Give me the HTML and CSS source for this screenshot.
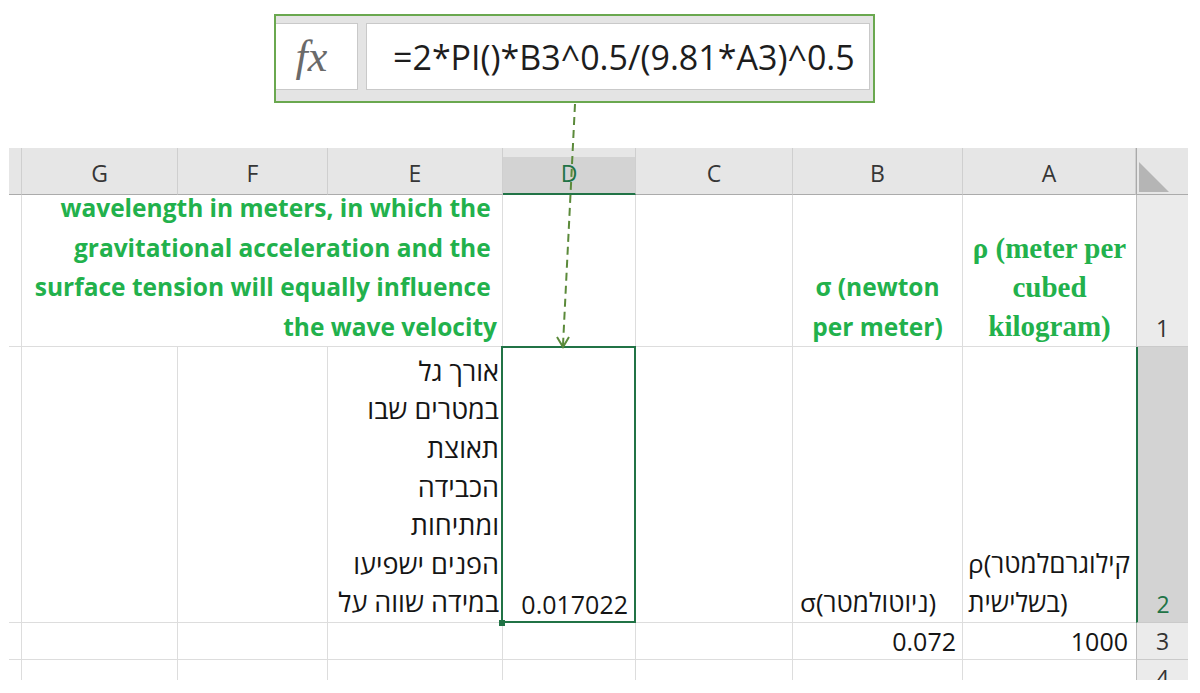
FILE: index.html
```html
<!DOCTYPE html>
<html lang="en">
<head>
<meta charset="utf-8">
<title>Formula</title>
<link rel="stylesheet" href="styles.css">
</head>
<body>
<div class="formula-bar">
  <div class="fx-box"><span class="fx">fx</span></div>
  <div class="formula-input">=2*PI()*B3^0.5/(9.81*A3)^0.5</div>
</div>

<div class="sheet">
  <!-- header row -->
  <div class="hd"></div>
  <div class="hd">G</div>
  <div class="hd">F</div>
  <div class="hd">E</div>
  <div class="hd hd-sel">D</div>
  <div class="hd">C</div>
  <div class="hd">B</div>
  <div class="hd">A</div>
  <div class="corner"><div class="tri"></div></div>

  <!-- row 1 -->
  <div class="c"></div>
  <div class="c merged green-text">wavelength in meters, in which the&nbsp;<br>gravitational acceleration and the&nbsp;<br>surface tension will equally influence&nbsp;<br>the wave velocity</div>
  <div class="c"></div>
  <div class="c"></div>
  <div class="c center green-text">σ (newton<br>per meter)</div>
  <div class="c ca center green-serif">ρ (meter per<br>cubed<br>kilogram)</div>
  <div class="rh rh-bottom">1</div>

  <!-- row 2 -->
  <div class="c"></div>
  <div class="c"></div>
  <div class="c"></div>
  <div class="c heb" dir="rtl">אורך גל<br>במטרים שבו<br>תאוצת<br>הכבידה<br>ומתיחות<br>הפנים ישפיעו<br>במידה שווה על</div>
  <div class="c sel num">0.017022</div>
  <div class="c"></div>
  <div class="c heb-l" dir="ltr">σ(ניוטולמטר)</div>
  <div class="c ca heb-l heb-a" dir="ltr">ρ(קילוגרםלמטר<br>בשלישית)</div>
  <div class="rh rh-bottom rh-sel">2</div>

  <!-- row 3 -->
  <div class="c"></div>
  <div class="c"></div>
  <div class="c"></div>
  <div class="c"></div>
  <div class="c"></div>
  <div class="c"></div>
  <div class="c num num-b">0.072</div>
  <div class="c ca num num-a">1000</div>
  <div class="rh rh-mid">3</div>

  <!-- row 4 -->
  <div class="c"></div>
  <div class="c"></div>
  <div class="c"></div>
  <div class="c"></div>
  <div class="c"></div>
  <div class="c"></div>
  <div class="c"></div>
  <div class="c ca"></div>
  <div class="rh rh-mid">4</div>
</div>

<svg class="arrow" width="1200" height="693" viewBox="0 0 1200 693">
  <path d="M575 104 L563 345" fill="none" stroke="#5b8a3a" stroke-width="2" stroke-dasharray="8 5"/>
  <path d="M557 337 L563 347 L569 337" fill="none" stroke="#5b8a3a" stroke-width="2"/>
</svg>
</body>
</html>
```
FILE: styles.css
```css
html, body {
  margin: 0;
  padding: 0;
}
body {
  position: relative;
  width: 1200px;
  height: 693px;
  overflow: hidden;
  background: #ffffff;
  font-family: "Open Sans", "Liberation Sans", "DejaVu Sans", sans-serif;
  color: #1a1a1a;
}

/* formula bar */
.formula-bar {
  box-sizing: border-box;
  margin: 14px 0 0 274px;
  width: 601px;
  height: 89px;
  border: 2px solid #6aa84f;
  background: #e4e4e4;
  display: flex;
  gap: 8px;
  padding: 7px 3px 11px 0;
}
.fx-box {
  box-sizing: border-box;
  width: 82px;
  background: #ffffff;
  border: 1px solid #c9c9c9;
  border-left: none;
  display: flex;
  align-items: center;
  justify-content: center;
}
.fx {
  font-family: "Liberation Serif", serif;
  font-style: italic;
  font-size: 44px;
  color: #6a6a6a;
  padding-right: 10px;
}
.formula-input {
  flex: 1;
  box-sizing: border-box;
  background: #ffffff;
  border: 1px solid #c9c9c9;
  padding-left: 26px;
  display: flex;
  align-items: center;
  font-size: 34px;
  color: #1d1d1d;
  white-space: nowrap;
}

/* sheet */
.sheet {
  margin: 45px 0 0 9px;
  width: 1179px;
  height: 532px;
  overflow: hidden;
  display: grid;
  grid-template-columns: 13px 156px 150px 175px 133px 157px 170px 173px 52px;
  grid-template-rows: 47px 152px 276px 37px 37px;
}
.hd {
  box-sizing: border-box;
  background: #e6e6e6;
  border-right: 1px solid #cfcfcf;
  border-bottom: 1px solid #ababab;
  display: flex;
  align-items: center;
  justify-content: center;
  font-size: 23px;
  color: #363636;
  padding-top: 4px;
}
.hd-sel {
  background: linear-gradient(#e6e6e6 9px, #d3d3d3 9px);
  border-bottom: 2px solid #217346;
  color: #217346;
}
.corner {
  box-sizing: border-box;
  background: #e6e6e6;
  border-left: 1px solid #a9a9a9;
  border-bottom: 1px solid #ababab;
  display: flex;
  align-items: flex-end;
  padding: 0 0 2px 2px;
}
.tri {
  width: 30px;
  height: 30px;
  background: #b5b5b5;
  clip-path: polygon(0 0, 0 100%, 100% 100%);
}

.c {
  box-sizing: border-box;
  border-right: 1px solid #dddddd;
  border-bottom: 1px solid #dddddd;
  display: flex;
  flex-direction: column;
  justify-content: flex-end;
}
.ca {
  border-right: none;
}
.merged {
  grid-column: span 3;
  text-align: right;
  padding-right: 5px;
}
.green-text {
  font-weight: 700;
  font-size: 24.5px;
  line-height: 39.5px;
  color: #22b14c;
  white-space: nowrap;
}
.green-serif {
  font-family: "Liberation Serif", serif;
  font-weight: 700;
  font-size: 29px;
  line-height: 39px;
  color: #22b14c;
  white-space: nowrap;
}
.center {
  text-align: center;
}
.heb {
  text-align: right;
  padding-right: 3px;
  font-size: 27px;
  line-height: 38.6px;
  color: #151515;
  white-space: nowrap;
}
.heb-l {
  text-align: left;
  padding-left: 7px;
  font-size: 26px;
  line-height: 39px;
  color: #151515;
  white-space: nowrap;
}
.heb-a {
  padding-left: 5px;
}
.num {
  text-align: right;
  font-size: 25px;
  line-height: 36px;
  color: #151515;
  padding-right: 7px;
}
.num-b {
  padding-right: 6px;
}
.num-a {
  padding-right: 8px;
}
.sel {
  position: relative;
  z-index: 1;
}
.sel::after {
  content: "";
  position: absolute;
  left: -2px;
  top: -1px;
  right: -1px;
  bottom: -1px;
  border: 2px solid #217346;
}
.sel::before {
  content: "";
  position: absolute;
  left: -4px;
  bottom: -4px;
  width: 6px;
  height: 6px;
  background: #217346;
  z-index: 2;
}

.rh {
  box-sizing: border-box;
  background: #ebebeb;
  border-left: 1px solid #bdbdbd;
  border-bottom: 1px solid #cacaca;
  display: flex;
  justify-content: center;
  font-size: 23px;
  color: #333333;
}
.rh-bottom {
  align-items: flex-end;
  padding-bottom: 2px;
}
.rh-mid {
  align-items: center;
}
.rh-sel {
  background: #d3d3d3;
  border-left: 2px solid #217346;
  color: #217346;
}

.arrow {
  position: absolute;
  left: 0;
  top: 0;
  pointer-events: none;
  z-index: 5;
}
```
